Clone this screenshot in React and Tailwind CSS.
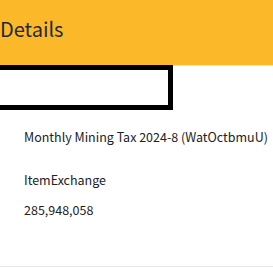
export default function App() {
  return (
    <div className="w-[273px] h-[269px] bg-white overflow-hidden font-['Noto_Sans_CJK_JP',sans-serif]">
      {/* Header */}
      <div className="h-[65px] bg-[#fbb829] pt-[19px]">
        <h2 className="text-[20px] leading-[20px] text-[#1e293b]">Details</h2>
      </div>

      {/* Tab bar */}
      <div className="border-t border-[#e5e7eb] h-[45px]">
        <div className="-mt-px -ml-[5px] w-[178px] h-[45px] border-[5px] border-black bg-white" />
      </div>

      {/* Fields */}
      <div className="pl-6 pt-[17px] h-[157px] border-b border-[#e5e7eb] text-[12.5px] text-[#222] leading-[20px] whitespace-nowrap">
        <p>Monthly Mining Tax 2024-8 (WatOctbmuU)</p>
        <p className="mt-[23px]">ItemExchange</p>
        <p className="mt-[10px]">285,948,058</p>
      </div>
    </div>
  )
}
